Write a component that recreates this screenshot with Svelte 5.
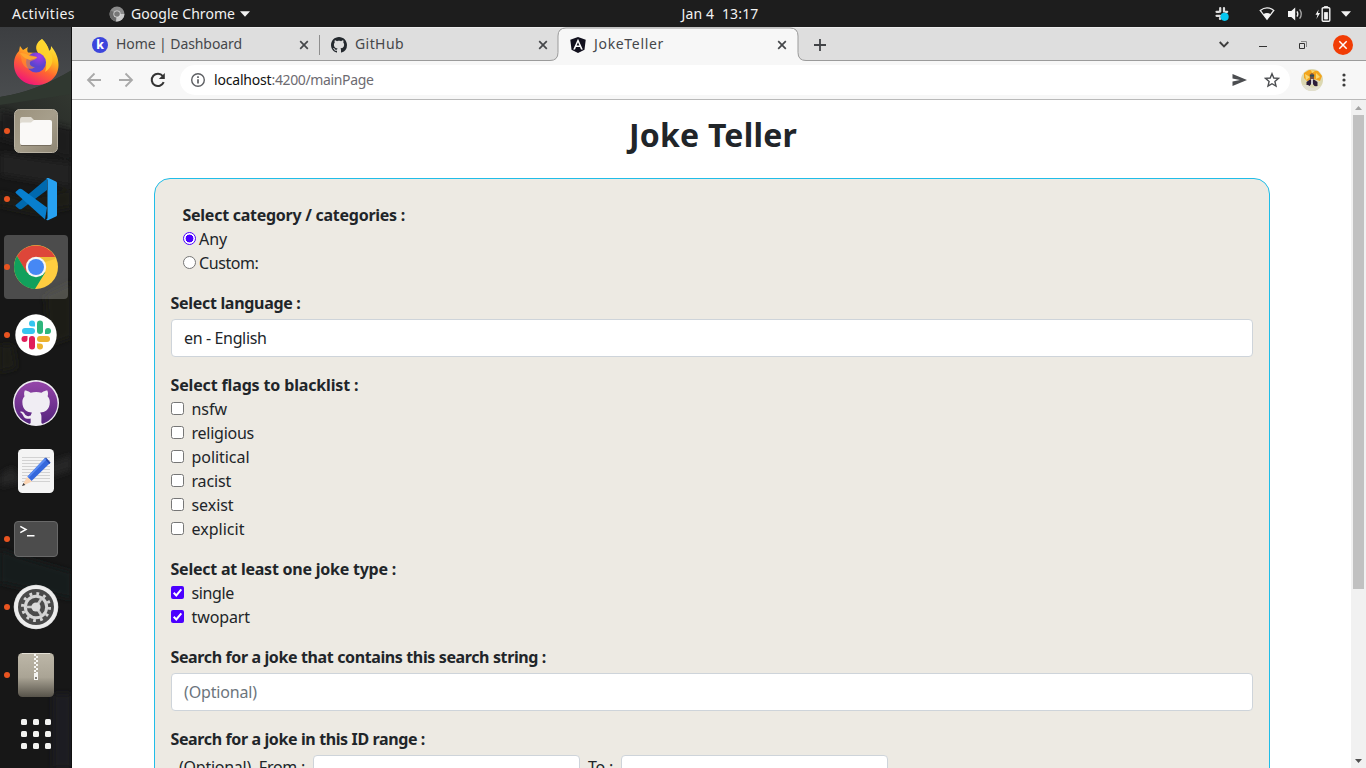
<script>
  const flags = [['nsfw', 35.5], ['religious', 62.5], ['political', 58], ['racist', 39.5], ['sexist', 42], ['explicit', 53]];
  const types = [['single', 42.5], ['twopart', 58.5]];

  const octocat = 'M8 0C3.58 0 0 3.58 0 8c0 3.54 2.29 6.53 5.47 7.59.4.07.55-.17.55-.38 0-.19-.01-.82-.01-1.49-2.01.37-2.53-.49-2.69-.94-.09-.23-.48-.94-.82-1.13-.28-.15-.68-.52-.01-.53.63-.01 1.08.58 1.23.82.72 1.21 1.87.87 2.33.66.07-.52.28-.87.51-1.07-1.78-.2-3.64-.89-3.64-3.95 0-.87.31-1.59.82-2.15-.08-.2-.36-1.02.08-2.12 0 0 .67-.21 2.2.82.64-.18 1.32-.27 2-.27s1.36.09 2 .27c1.53-1.04 2.2-.82 2.2-.82.44 1.1.16 1.92.08 2.12.51.56.82 1.27.82 2.15 0 3.07-1.87 3.75-3.65 3.95.29.25.54.73.54 1.48 0 1.07-.01 1.93-.01 2.2 0 .21.15.46.55.38A8.01 8.01 0 0016 8c0-4.42-3.58-8-8-8z';

  // Adjusts tracking so that a label occupies the given width.
  function fit(node, width) {
    const natural = node.getBoundingClientRect().width;
    node.style.letterSpacing = `${(width - natural) / node.textContent.length}px`;
  }
</script>

{#snippet txt(text, width)}<span class="txt" use:fit={width}>{text}</span>{/snippet}

{#snippet close()}
  <svg class="close" width="10" height="10" viewBox="0 0 10 10"><path d="M1.2 1.2l7.6 7.6M8.8 1.2L1.2 8.8" stroke="#45474a" stroke-width="1.7" /></svg>
{/snippet}

<div class="screen">
  <header class="topbar">
    <div class="top-left">
      {@render txt('Activities', 63)}
      <svg class="app-mark" width="16" height="16" viewBox="0 0 16 16">
        <circle cx="8" cy="8" r="7.5" fill="#8b8b8b" /><path d="M8 8L1.6 4.2A7.5 7.5 0 0 0 7 15.4z" fill="#6a6a6a" /><path d="M8 8h7.4A7.5 7.5 0 0 1 7 15.4z" fill="#c9c9c9" /><circle cx="8" cy="8" r="3.6" fill="#ddd" /><circle cx="8" cy="8" r="2.8" fill="#777" />
      </svg>
      {@render txt('Google Chrome', 104)}
      <svg class="caret" width="10" height="6" viewBox="0 0 10 6"><path d="M0 .3h10L5 5.7z" fill="#f2f2f2" /></svg>
    </div>
    <div class="clock">{@render txt('Jan 4  13:17', 77)}</div>
    <div class="tray">
      <svg width="16" height="16" viewBox="0 0 16 16">
        <g stroke="#ddd" stroke-width="2.2" stroke-linecap="round"><path d="M6.200 2v3.600M2.500 5.800h2.600M10 2v3.600M11.600 5.800h1.600M2.500 9.800h3.600M6 12v1M10 10h3" /></g>
        <circle cx="10.6" cy="10.8" r="4.1" fill="#07c8f2" />
      </svg>
      <svg class="wifi" width="16" height="14" viewBox="0 0 16 14"><path d="M1.2 3.4Q8-1.6 14.8 3.4L8 12.3z" fill="none" stroke="#eee" stroke-width="1.3" /><path d="M4.3 7.2Q8 4.7 11.7 7.2L8 12.6z" fill="#f5f5f5" /></svg>
      <svg class="sound" width="16" height="14" viewBox="0 0 16 14"><path d="M0 4h3.3L7.2.5v13L3.3 10H0z" fill="#f5f5f5" /><path d="M9 4.3q1.7 2.7 0 5.4" fill="none" stroke="#eee" stroke-width="1.3" /><path d="M11.6 2.3q3.3 4.7 0 9.4" fill="none" stroke="#aaa" stroke-width="1.3" /></svg>
      <svg class="power" width="16" height="16" viewBox="0 0 16 16"><path d="M3.6 3.5L.5 8.700h2L1.400 13l3.700-5.900H3z" fill="#f5f5f5" /><rect x="7.200" y="1.700" width="7.600" height="13.600" rx="1" fill="none" stroke="#f2f2f2" stroke-width="1.400" /><path d="M9.300.6h3.400v.5H9.300zM9.400 6.500h3.200v6.600H9.400z" fill="#f2f2f2" stroke="#f2f2f2" stroke-width=".8" /></svg>
      <svg width="10" height="6" viewBox="0 0 10 6"><path d="M0 .3h10L5 5.7z" fill="#f2f2f2" /></svg>
    </div>
  </header>

  <div class="desktop">
    <nav class="dock">
      <svg class="wallpaper" width="72" height="741" viewBox="0 0 72 741">
        <defs>
          <linearGradient id="sky" x2="0" y2="1"><stop stop-color="#3c3e41" /><stop offset="1" stop-color="#4c4f51" /></linearGradient>
          <linearGradient id="hill" x1="1" y1="0" x2="0" y2="1"><stop stop-color="#353b33" /><stop offset="1" stop-color="#252725" /></linearGradient>
          <filter id="soft" x="-20%" y="-20%" width="140%" height="140%"><feGaussianBlur stdDeviation="3" /></filter>
        </defs>
        <rect width="72" height="741" fill="#171717" />
        <rect width="72" height="82" fill="url(#sky)" />
        <path d="M0 70Q35 65 72 43v60L0 94z" fill="url(#hill)" />
        <path d="M0 70Q35 65 72 43v24L0 78z" fill="#303830" />
        <g filter="url(#soft)">
          <path d="M0 83l72 19v30L0 112z" fill="#1b1c1c" /><path d="M0 126l72 10v24L0 148z" fill="#202020" />
          <path d="M0 165l20 6 52-9v18l-35 7-37-8zM45 268l27-13v55l-23 8zM0 318h13l4 23-17 4z" fill="#1c1f18" />
          <path d="M0 448l12-8 11 14-23 6zM41 439l31-11v15l-25 8z" fill="#252627" />
          <path d="M0 522l21 8 51 15v27L0 556z" fill="#171b1e" /><path d="M53 667h19v74H53z" fill="#1d1d21" />
        </g>
        <path d="M71.5 0v741" stroke="#101010" />
      </svg>

      <div class="slot">
        <svg class="ico" viewBox="0 0 44 44">
          <defs>
            <linearGradient id="fx" x1=".8" y1="0" x2=".3" y2="1"><stop stop-color="#fff14a" /><stop offset=".35" stop-color="#ffbd1f" /><stop offset=".62" stop-color="#ff6530" /><stop offset="1" stop-color="#f0127c" /></linearGradient>
            <radialGradient id="globe" cx=".65" cy=".2"><stop stop-color="#a83be6" /><stop offset="1" stop-color="#5b45cf" /></radialGradient>
          </defs>
          <path d="M28-2c4 4 6 7 7 12 2-1 2-3 2-5 5 6 7.500 12 7.500 19C44.500 36 35 44 22.500 44S0 35.500 0 23.500C0 17 2 13 5 10l1-5 3 4 5-3c-1 2-1 4 0 5.500L24 12C20 6 23 1 28-2z" fill="url(#fx)" />
          <path d="M28-2c-5 5-7 10-2 16 5 4 8 10 5 17 8-5 10-14 4-22-1-3-3-7-7-11z" fill="#ffd42d" opacity=".8" />
          <circle cx="22" cy="21.500" r="10" fill="url(#globe)" />
          <path d="M5 12c4 0 8 0 11 2l7 2c0 3-5 3-7 5-1 3 2 5 5 5-5 4-11 1-13-5-1-3 0-5-3-9z" fill="#ff942b" opacity=".6" /><path d="M6 12c4 0 7 1 10 3l7 1c-1 2-5 2-7 3-4-1-7-3-10-7z" fill="#ffa62e" />
        </svg>
      </div>
      <div class="slot running">
        <svg class="ico" viewBox="0 0 44 44">
          <defs><linearGradient id="fl" x2="1" y2="1"><stop stop-color="#9b927d" /><stop offset=".5" stop-color="#a69e8b" /><stop offset="1" stop-color="#8e8674" /></linearGradient></defs>
          <rect x=".5" y=".5" width="43" height="43" rx="5" fill="url(#fl)" stroke="#b8b1a2" />
          <path d="M6 11q0-3 2-3h9l3 3h14v6H6z" fill="#dfdbd1" /><path d="M6 15q0-1.500 2-1.500h9l3-2.500h16q2 0 2 2v21q0 2-2 2H8q-2 0-2-2z" fill="#faf9f7" /><path d="M7 36.500h30" stroke="#6d6658" stroke-width=".8" />
        </svg>
      </div>
      <div class="slot running">
        <svg class="ico" viewBox="0 0 44 44">
          <path d="M2 29.500L5 32q1.500.8 3-.3L33 13V1.500L1.700 28q-.8.8.3 1.500z" fill="#0069ae" />
          <path d="M1.700 16L31 42.500l2-12L8 12.300q-1.500-1.100-3-.3L2 14.500q-.9.700-.3 1.500z" fill="#087fce" />
          <path d="M32 1.600Q33 .5 34.500 1.100L42 4.500q1 .5 1 1.600v31.800q0 1.100-1 1.600l-7.500 3.500q-1.500.6-2.600-.5 1.600.4 1.600-2V3.600q0-2.300-1.500-2z" fill="#27a1f1" />
        </svg>
      </div>
      <div class="slot running focused">
        <svg class="ico" viewBox="0 0 44 44">
          <circle cx="22" cy="22" r="22" fill="#ffcd40" />
          <path d="M3 11A22 22 0 0 1 41.100 12H22L12.300 27.500z" fill="#de4639" />
          <path d="M3 11A22 22 0 0 0 21 44L31.500 27 22 32 12.500 27z" fill="#11a05c" />
          <path d="M22 12h19v2L31 17z" fill="#d8a92c" opacity=".45" />
          <circle cx="22" cy="22" r="10.200" fill="#f5f5f5" /><circle cx="22" cy="22" r="8" fill="#4688f4" />
        </svg>
      </div>
      <div class="slot running">
        <svg class="ico" viewBox="0 0 44 44">
          <circle cx="22" cy="22" r="20.700" fill="#fff" />
          <g fill="#36c5f0"><rect x="8" y="15" width="13" height="6" rx="3" /><path d="M21 13.500h-3a3 3 0 1 1 3-3z" /></g>
          <g fill="#2eb67d"><rect x="23" y="7.500" width="6" height="13.500" rx="3" /><path d="M31 21v-3a3 3 0 1 1 3 3z" /></g>
          <g fill="#ecb22e"><rect x="23" y="23" width="13" height="6" rx="3" /><path d="M23 30.500h3a3 3 0 1 1-3 3z" /></g>
          <g fill="#e01e5a"><rect x="15" y="23" width="6" height="13.500" rx="3" /><path d="M13.500 23v3a3 3 0 1 1-3-3z" /></g>
        </svg>
      </div>
      <div class="slot">
        <svg class="ico" viewBox="0 0 44 44">
          <defs><linearGradient id="gh" x2="0" y2="1"><stop stop-color="#9546a9" /><stop offset="1" stop-color="#56247e" /></linearGradient></defs>
          <circle cx="22" cy="22" r="23" fill="#f0edf3" />
          <path d={octocat} transform="translate(.5 .7) scale(2.690)" fill="url(#gh)" />
        </svg>
      </div>
      <div class="slot">
        <svg class="ico" viewBox="0 0 44 44">
          <rect x="4" y="0" width="36" height="44" rx="4.500" fill="#f4f4f4" />
          <path d="M8 8.500h28M8 11.500h28M8 14.500h28M8 17.500h28M8 20.500h28M8 23.500h28M8 26.500h28M8 29.500h28M8 32.500h28" stroke="#d2d2d2" />
          <path d="M13.500 27.500L31 9l5 5-18.500 18z" fill="#3568dc" /><path d="M30.500 9.500l1.500-1 4.500 5-1 1.500z" fill="#2347ad" /><path d="M13.500 27.500L31 9l1.500 1.500-18 18.500z" fill="#5a8bf1" />
          <path d="M13 28l5 4.500L8 37z" fill="#fbd4b3" /><path d="M9.500 34l1.800 2L8 37z" fill="#39383c" />
        </svg>
      </div>
      <div class="slot running">
        <svg class="ico" viewBox="0 0 44 44">
          <rect x=".5" y="4.500" width="43" height="35" rx="3.500" fill="#4c4c4c" stroke="#696969" />
          <path d="M6.300 9.300l5.700 3.200-5.700 3.200M13 18.700h7.500" fill="none" stroke="#fff" stroke-width="1.500" />
        </svg>
      </div>
      <div class="slot running">
        <svg class="ico" viewBox="0 0 44 44">
          <circle cx="22" cy="22" r="22.300" fill="#d9d9d9" /><circle cx="22" cy="22" r="21.600" fill="#ededed" /><circle cx="22" cy="22" r="18" fill="#4a4a4a" />
          <circle cx="22" cy="22" r="13.500" fill="none" stroke="#d4d4d4" stroke-width="3" stroke-dasharray="2.800 4.268" />
          <circle cx="22" cy="22" r="10.700" fill="none" stroke="#d4d4d4" stroke-width="3" />
          <path d="M22 22h-9M22 22l5.500-8.500M22 22l5.500 8.500" stroke="#c9c9c9" stroke-width="2.500" />
          <circle cx="22" cy="22" r="4.600" fill="#dcdcdc" />
        </svg>
      </div>
      <div class="slot running">
        <svg class="ico" viewBox="0 0 44 44">
          <defs><linearGradient id="zip" x2="0" y2="1"><stop stop-color="#bdb7a8" /><stop offset=".55" stop-color="#aaa495" /><stop offset="1" stop-color="#57534a" /></linearGradient></defs>
          <rect x="4" width="36" height="44" rx="4.500" fill="url(#zip)" /><path d="M8 .5h28" stroke="#e3dfd5" />
          <path d="M21 1v20" stroke="#f7f7f4" stroke-width="2" stroke-dasharray="2 2" /><path d="M23 3v18" stroke="#f7f7f4" stroke-width="2" stroke-dasharray="2 2" />
          <path d="M20 20h4v7h-4z" fill="#f4f4f1" /><path d="M21 24h2v2h-2z" fill="#85817a" />
        </svg>
      </div>
      <div class="apps">{#each Array(9) as _}<i></i>{/each}</div>
    </nav>

    <section class="browser">
      <div class="tabs">
        <div class="tab first">
          <svg class="fav" viewBox="0 0 16 16"><circle cx="8" cy="8" r="8" fill="#3c45dc" /><text x="8" y="12.400" text-anchor="middle" font-family="Noto Sans, sans-serif" font-weight="800" font-size="12" fill="#fff">k</text></svg>
          {@render txt('Home | Dashboard', 126)}{@render close()}
        </div>
        <div class="tab second">
          <svg class="fav" viewBox="0 0 16 16"><path d={octocat} fill="#24292e" /></svg>
          {@render txt('GitHub', 49)}{@render close()}
        </div>
        <div class="tab active">
          <svg class="shape" width="256" height="34" viewBox="0 0 256 34"><path d="M0 34v-.5q8 0 8-8V9q0-8 8-8h224q8 0 8 8v16.500q0 8 8 8v.5z" fill="#f7f7f7" /><path d="M0 33.500q8 0 8-8V9q0-8 8-8h224q8 0 8 8v16.500q0 8 8 8" fill="none" stroke="#9b9b9b" /></svg>
          <svg class="fav" viewBox="0 0 16 16"><path d="M8 0l7.700 2.700-1.200 10L8 16l-6.500-3.300L.3 2.700z" fill="#11101d" /><path d="M8 1.800L3.200 12.500H5l1-2.400h4l1 2.400h1.800zM8 5.200l1.400 3.400H6.600z" fill="#fff" /></svg>
          {@render txt('JokeTeller', 70)}{@render close()}
        </div>
        <svg class="plus" width="12" height="12" viewBox="0 0 12 12"><path d="M6 0v12M0 6h12" stroke="#414346" stroke-width="1.800" /></svg>
        <div class="window-controls">
          <svg width="10" height="7" viewBox="0 0 10 7"><path d="M.7 1L5 5.300 9.300 1" fill="none" stroke="#3d3d3d" stroke-width="1.900" /></svg>
          <svg class="min" width="8" height="2" viewBox="0 0 8 2"><path d="M0 .5h8" stroke="#333" /></svg>
          <svg class="restore" width="8" height="8" viewBox="0 0 8 8"><path d="M.5 2.500h5v5h-5z" fill="none" stroke="#333" /><path d="M2 .5h5.500V6" fill="none" stroke="#888" /></svg>
          <svg class="quit" width="20" height="20" viewBox="0 0 20 20"><circle cx="10" cy="10" r="10" fill="#f13c05" /><path d="M6.300 6.300l7.400 7.400m0-7.400l-7.400 7.400" stroke="#fff" stroke-width="1.500" /></svg>
        </div>
      </div>

      <div class="toolbar">
        <svg class="arrow" viewBox="0 0 16 16"><path d="M15 8H2M8.500 1.500L2 8l6.500 6.500" fill="none" stroke="#a9a9a9" stroke-width="1.800" /></svg>
        <svg class="arrow" viewBox="0 0 16 16"><path d="M1 8h13M7.500 1.500L14 8l-6.500 6.500" fill="none" stroke="#a9a9a9" stroke-width="1.800" /></svg>
        <svg class="arrow" viewBox="0 0 16 16"><path d="M13.700 10.200A6.200 6.200 0 1 1 12.800 4" fill="none" stroke="#333" stroke-width="2" /><path d="M14.800 1v6H8.800z" fill="#333" /></svg>
        <div class="omnibox">
          <svg width="16" height="16" viewBox="0 0 16 16"><circle cx="8" cy="8" r="6.300" fill="none" stroke="#5d5f63" stroke-width="1.400" /><path d="M8 7.200v4.200M8 4.200V6" stroke="#5d5f63" stroke-width="1.700" /></svg>
          <div class="url"><b>{@render txt('localhost', 57.5)}</b>{@render txt(':4200/mainPage', 102)}</div>
          <svg class="send" width="15" height="12" viewBox="0 0 15 12"><path d="M.5 0L15 6 .5 12V7.500L8 6 .5 4.500z" fill="#4b4d50" /></svg>
          <svg class="star" width="16" height="16" viewBox="0 0 16 16"><path d="M8 1.700l1.800 4.300 4.700.4-3.600 3 1.100 4.700L8 11.700l-4 2.400 1.100-4.700-3.600-3L6.200 6z" fill="none" stroke="#4b4d50" stroke-width="1.400" /></svg>
        </div>
        <svg class="avatar" width="22" height="22" viewBox="0 0 22 22">
          <defs><clipPath id="face"><circle cx="11" cy="11" r="11" /></clipPath></defs>
          <g clip-path="url(#face)"><path d="M0 0h22v22H0z" fill="#dcd8b1" /><path d="M3 4l5-3 9 1 4 5-2 5-6-2-7 2-3-3z" fill="#f3a51c" /><path d="M4 5l5 3-4 3zM15 4l4 4-4 2zM10 1l4 1-3 2z" fill="#f9d870" /><path d="M9 5.500q2-2.500 4 0V10H9z" fill="#745044" /><path d="M8.800 6h4.400v1.600H8.800z" fill="#28505a" /><path d="M5.500 13l3.500-2.500h4l3.500 2.500v4.500l-3-.5-2.500-3-2.500 3-3-.5z" fill="#2c1d39" /><path d="M10.200 10h1.600v5h-1.600z" fill="#eee" /><path d="M0 16l7 0 4 3 6-2 5 0v5H0z" fill="#e1dfd0" /></g>
        </svg>
        <svg class="kebab" width="4" height="14" viewBox="0 0 4 14"><g fill="#3d3d3d"><circle cx="2" cy="2" r="1.600" /><circle cx="2" cy="7" r="1.600" /><circle cx="2" cy="12" r="1.600" /></g></svg>
      </div>

      <div class="viewport">
        <main>
          <h1>{@render txt('Joke Teller', 168)}</h1>
          <form class="card">
            <div class="group inset">
              <strong>{@render txt('Select category / categories :', 222.5)}</strong>
              <label><i class="radio on"></i>{@render txt('Any', 28)}</label>
              <label><i class="radio"></i>{@render txt('Custom:', 59.5)}</label>
            </div>
            <div class="group">
              <strong>{@render txt('Select language :', 130)}</strong>
              <div class="field">{@render txt('en - English', 82.5)}</div>
            </div>
            <div class="group">
              <strong>{@render txt('Select flags to blacklist :', 188)}</strong>
              {#each flags as [name, w]}
                <label class="wide"><i class="box"></i>{@render txt(name, w)}</label>
              {/each}
            </div>
            <div class="group">
              <strong>{@render txt('Select at least one joke type :', 225.5)}</strong>
              {#each types as [name, w]}
                <label class="wide">
                  <svg class="tick" width="13" height="13" viewBox="0 0 13 13"><rect width="13" height="13" rx="2" fill="#4b00ff" /><path d="M2.700 6.800l2.600 2.600 5-6" fill="none" stroke="#fff" stroke-width="2" /></svg>
                  {@render txt(name, w)}
                </label>
              {/each}
            </div>
            <div class="group">
              <strong>{@render txt('Search for a joke that contains this search string :', 375.5)}</strong>
              <div class="field hint">{@render txt('(Optional)', 73)}</div>
            </div>
            <div class="group">
              <strong>{@render txt('Search for a joke in this ID range :', 254.5)}</strong>
              <div class="range">
                {@render txt('(Optional)  From :', 126)}
                <div class="num"></div>
                {@render txt('To :', 25)}
                <div class="num"></div>
              </div>
            </div>
          </form>
        </main>
        <div class="scrollbar">
          <svg width="7" height="4" viewBox="0 0 7 4"><path d="M0 4h7L3.500 0z" fill="#a3a3a3" /></svg>
          <div class="thumb"></div>
          <svg class="down" width="7" height="4" viewBox="0 0 7 4"><path d="M0 0h7L3.500 4z" fill="#505050" /></svg>
        </div>
      </div>
    </section>
  </div>
</div>

<style>
  :global(body) { margin: 0; overflow: hidden; }
  * { box-sizing: border-box; }
  svg { display: block; flex: none; }
  .screen { width: 1366px; height: 768px; overflow: hidden; display: flex; flex-direction: column; font-family: "Noto Sans", sans-serif; color: #212529; background: #fff; }
  .txt { white-space: pre; display: inline-block; flex: none; }

  .topbar { flex: 0 0 27px; display: grid; grid-template-columns: 1fr auto 1fr; align-items: center; background: #1d1d1d; color: #f2f2f2; font-size: 14px; line-height: 26px; padding: 0 15px 0 12px; }
  .top-left, .tray { display: flex; align-items: center; }
  .app-mark { margin: 0 6px 0 34px; }
  .caret { margin-left: 5px; }
  .clock { padding-left: 77px; }
  .tray { justify-content: flex-end; }
  .wifi { margin-left: 29px; }
  .sound { margin-left: 13px; }
  .power { margin: 0 10px 0 11px; }

  .desktop { flex: 1; display: flex; min-height: 0; }
  .dock { flex: 0 0 72px; display: flex; flex-direction: column; position: relative; padding-top: 2px; overflow: hidden; }
  .wallpaper { position: absolute; left: 0; top: 0; }
  .slot { position: relative; flex: 0 0 68px; display: flex; align-items: center; justify-content: center; }
  .slot.running::before { content: ""; position: absolute; left: 4px; top: 31px; width: 6px; height: 6px; border-radius: 50%; background: #e95420; z-index: 1; }
  .slot.focused::after { content: ""; position: absolute; left: 4px; top: 2px; width: 64px; height: 64px; border-radius: 4px; background: rgba(255,255,255,.23); }
  .ico { width: 44px; height: 44px; overflow: visible; position: relative; z-index: 1; }
  .apps { position: relative; display: grid; grid-template-columns: repeat(3, 6px); gap: 6px; padding: 10px 0 0 21px; }
  .apps i { height: 6px; border-radius: 1.500px; background: #f2f2f0; }

  .browser { flex: 1; display: flex; flex-direction: column; min-width: 0; }
  .tabs { flex: 0 0 34px; display: flex; align-items: center; background: #dedede; border-top: 1px solid #ececec; box-shadow: inset 0 -1px #9b9b9b; color: #45474a; font-size: 14px; }
  .tab { height: 33px; display: flex; align-items: center; position: relative; padding: 0 14px 0 11px; }
  .tab.first { width: 248px; padding: 0 11px 0 20px; }
  .tab.first::after { content: ""; position: absolute; right: 0; top: 7px; height: 20px; width: 1px; background: #8e8e8e; }
  .tab.second { width: 238px; padding-right: 10px; }
  .tab.active { width: 240px; padding: 0 11px 0 12px; }
  .tab .txt, .tab .fav, .tab .close { position: relative; }
  .tab .txt { padding-bottom: 2px; }
  .fav { width: 16px; height: 16px; margin-right: 8px; }
  .close { margin-left: auto; }
  .shape { position: absolute; left: -8px; top: -1px; }
  .plus { margin-left: 16px; }
  .window-controls { margin-left: auto; display: flex; align-items: center; padding-right: 13px; }
  .min { margin: 5px 32px 0 30px; }
  .quit { margin-left: 26px; }

  .toolbar { flex: 0 0 39px; display: flex; align-items: center; background: #f7f7f7; border-bottom: 1px solid #b9b9b9; padding: 0 20px 0 14px; }
  .arrow { width: 16px; height: 16px; margin-right: 16px; }
  .arrow:nth-child(3) { margin-right: 14px; }
  .omnibox { flex: 0 0 1110px; height: 30px; border-radius: 15px; background: #fff; display: flex; align-items: center; padding: 0 10px; font-size: 14px; }
  .url { margin-left: 8px; color: #6d6b71; line-height: 28px; }
  .url b { font-weight: 400; color: #111; }
  .send { margin-left: auto; }
  .star { margin: 0 0 0 17px; }
  .avatar { margin-left: 11px; }
  .kebab { margin-left: auto; }

  .viewport { flex: 1; display: flex; min-height: 0; }
  main { flex: 1; overflow: hidden; padding: 16px 81px 0 82px; font-size: 16px; line-height: 24px; }
  h1 { margin: 0 0 24px; height: 38px; line-height: 38px; font-size: 32px; text-align: center; font-weight: 700; padding-left: 2px; }
  .card { border: 1px solid #20bde8; border-radius: 16px; background: #edeae3; height: 800px; padding: 24px 16px; display: flex; flex-direction: column; gap: 16px; }
  .group { display: flex; flex-direction: column; }
  .inset { padding-left: 12px; }
  strong { font-weight: 700; height: 24px; margin-left: -.5px; }
  label { height: 24px; display: flex; align-items: center; gap: 3px; }
  label.wide { gap: 7.500px; }
  .radio, .box { width: 13px; height: 13px; border: 1px solid #767676; background: #fff; margin-top: -1px; flex: none; }
  .tick { margin-top: -1px; }
  .radio { border-radius: 50%; }
  .radio.on { border-color: #4b00ff; background: radial-gradient(circle, #4b00ff 0 3.700px, #fff 4.200px); }
  .box { border-radius: 2.500px; }
  .field { height: 38px; margin-top: 4px; border: 1px solid #ced4da; border-radius: 4px; background: #fff; padding: 6px 12px; }
  .hint { color: #6c757d; }
  .range { height: 38px; margin-top: 4px; display: flex; gap: 8px; padding-left: 8px; }
  .num { width: 267px; border: 1px solid #ced4da; border-radius: 4px; background: #fff; }
  .scrollbar { flex: 0 0 15px; background: #f1f1f1; display: flex; flex-direction: column; align-items: center; padding: 6px 0 5px; }
  .thumb { width: 11px; height: 474px; margin-top: 5px; background: #c1c1c1; }
  .down { margin-top: auto; }
</style>
